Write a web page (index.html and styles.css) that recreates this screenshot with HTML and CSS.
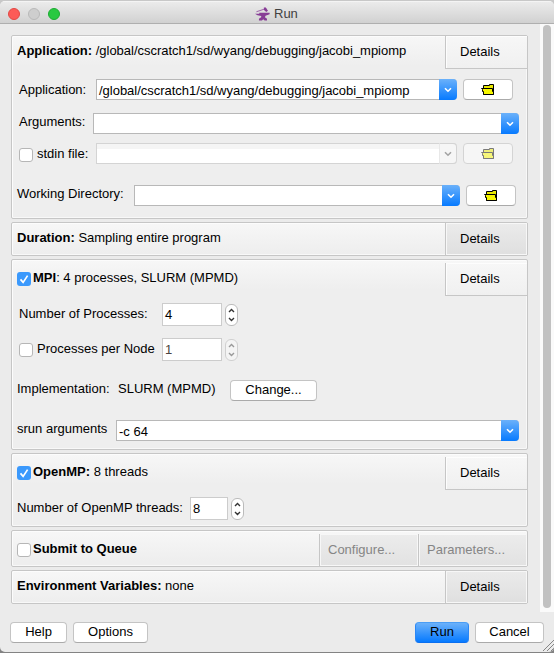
FILE: index.html
```html
<!DOCTYPE html>
<html lang="en">
<head>
<meta charset="utf-8">
<title>Run</title>
<link rel="stylesheet" href="styles.css">
</head>
<body>
<svg class="defs" width="0" height="0" aria-hidden="true">
  <symbol id="folder" viewBox="0 0 14 13"><path d="M2.5 11.5V2.5H8.5V1.5H12.5V11.5z" fill="#e8e800" stroke="#000"/><path d="M.5 5.5H11.5V8.5H12.5V11.5H2.5V8.5H1.5V6.5z" fill="#f6f600" stroke="#000"/></symbol>
  <symbol id="chevron" viewBox="0 0 8 6"><path d="M1 1.2l3 3 3-3" fill="none" stroke="currentColor" stroke-width="1.6"/></symbol>
  <symbol id="check" viewBox="0 0 14 14"><path d="M3.5 7.4l2.6 3L10.6 3.6" fill="none" stroke="#fff" stroke-width="1.7"/></symbol>
  <symbol id="steps" viewBox="0 0 13 22"><path d="M4 8l2.5-2.5L9 8M4 14l2.5 2.5L9 14" fill="none" stroke="currentColor" stroke-width="1.4"/></symbol>
</svg>
<div class="window">
  <header class="titlebar">
    <div class="lights"><i class="light close"></i><i class="light minimize"></i><i class="light maximize"></i></div>
    <svg class="anvil" viewBox="0 0 16 14"><path d="M0 6.6h4.6V5.6H15.6v1.6l-4.4 1.6-.6 1.6 2.2 1.6V14H10.2l-1.4-1.4L7.4 14H4.2v-2l2.4-1.6V9Q2 8.8 0 6.6z" fill="#873d96"/><path d="M1.5 4.6L10.5 1.6" stroke="#9a5ba6" stroke-width="1"/><path d="M9.4 0l2.2 0 2.2 3.4-1.8 1.4L9.6 2.6z" fill="#873d96"/></svg>
    <span class="title">Run</span>
  </header>
  <div class="viewport">
    <main class="panels">
      <section class="panel application">
        <div class="head"><span class="summary"><b>Application:</b> <span class="path">/global/cscratch1/sd/wyang/debugging/jacobi_mpiomp</span></span><button class="tab open">Details</button></div>
        <div class="row r-app"><label>Application:</label><div class="combo"><span class="value path">/global/cscratch1/sd/wyang/debugging/jacobi_mpiomp</span><span class="arrow"><svg><use href="#chevron"/></svg></span></div><button class="btn browse"><svg><use href="#folder"/></svg></button></div>
        <div class="row r-args"><label>Arguments:</label><div class="combo"><span class="value"></span><span class="arrow"><svg><use href="#chevron"/></svg></span></div></div>
        <div class="row r-stdin"><i class="box"></i><label>stdin file:</label><div class="combo disabled"><span class="value"></span><span class="arrow"><svg><use href="#chevron"/></svg></span></div><button class="btn browse disabled"><svg><use href="#folder"/></svg></button></div>
        <div class="row r-dir"><label>Working Directory:</label><div class="combo"><span class="value"></span><span class="arrow"><svg><use href="#chevron"/></svg></span></div><button class="btn browse"><svg><use href="#folder"/></svg></button></div>
      </section>
      <section class="panel duration">
        <div class="head"><span class="summary"><b>Duration:</b> Sampling entire program</span><button class="tab">Details</button></div>
      </section>
      <section class="panel mpi">
        <div class="head inset"><i class="box checked"><svg><use href="#check"/></svg></i><span class="summary"><b>MPI</b>: 4 processes, SLURM (MPMD)</span><button class="tab open">Details</button></div>
        <div class="row r-procs"><label>Number of Processes:</label><span class="number">4</span><span class="spin"><svg><use href="#steps"/></svg></span></div>
        <div class="row r-node"><i class="box"></i><label>Processes per Node</label><span class="number off">1</span><span class="spin disabled"><svg><use href="#steps"/></svg></span></div>
        <div class="row r-impl"><label>Implementation:</label><span class="impl">SLURM (MPMD)</span><button class="btn change">Change...</button></div>
        <div class="row r-srun"><label>srun arguments</label><div class="combo"><span class="value">-c 64</span><span class="arrow"><svg><use href="#chevron"/></svg></span></div></div>
      </section>
      <section class="panel openmp">
        <div class="head inset"><i class="box checked"><svg><use href="#check"/></svg></i><span class="summary"><b>OpenMP:</b> 8 threads</span><button class="tab open">Details</button></div>
        <div class="row r-threads"><label>Number of OpenMP threads:</label><span class="number">8</span><span class="spin"><svg><use href="#steps"/></svg></span></div>
      </section>
      <section class="panel queue">
        <div class="head inset"><i class="box"></i><span class="summary"><b>Submit to Queue</b></span><button class="tab dim configure">Configure...</button><button class="tab dim parameters">Parameters...</button></div>
      </section>
      <section class="panel env">
        <div class="head"><span class="summary"><b>Environment Variables:</b> none</span><button class="tab">Details</button></div>
      </section>
    </main>
    <div class="track"><div class="thumb"></div></div>
  </div>
  <footer class="actions">
    <button class="btn help">Help</button><button class="btn options">Options</button>
    <button class="btn run">Run</button><button class="btn cancel">Cancel</button>
    <svg class="grip" viewBox="0 0 11 11"><path d="M0 11L11 0M4 11l7-7M8 11l3-3" stroke="#858585" fill="none"/></svg>
  </footer>
</div>
</body>
</html>
```
FILE: styles.css
```css
* { box-sizing: border-box; }
body { margin: 0; width: 554px; height: 653px; overflow: hidden; background: linear-gradient(#c8c8c8 0 50%, #838383 50%); font: 13px/16px "Liberation Sans", Arial, sans-serif; color: #000; }
.defs { display: block; height: 0; }
button { font: inherit; color: inherit; margin: 0; padding: 0; }
svg { display: block; flex: none; }
.window { margin-top: 1px; height: 651px; background: #ebebeb; border-radius: 5px; overflow: hidden; display: flex; flex-direction: column; }

.titlebar { height: 23px; flex: none; display: flex; align-items: center; background: linear-gradient(#ebebeb, #d1d1d1); border-top: 1px solid #f4f4f4; border-bottom: 1px solid #afafaf; }
.lights { display: flex; gap: 8px; margin-left: 8px; width: 247px; padding-top: 2px; }
.light { width: 12px; height: 12px; border-radius: 50%; }
.close { background: #fc5b57; border: 1px solid #e34844; }
.minimize { background: #cecece; border: 1px solid #b9b9b9; }
.maximize { background: #29c941; border: 1px solid #1cac31; }
.anvil { width: 15px; height: 14px; margin-top: 2px; }
.title { margin: 2px 0 0 4px; color: #414141; }

.viewport { display: flex; height: 588px; flex: none; }
.panels { width: 540px; padding: 11px 12px 0 11px; display: flex; flex-direction: column; gap: 3px; }
.track { width: 14px; background: #fafafa; padding: 1px 2px 4px 3px; }
.thumb { width: 8px; height: 100%; border-radius: 4px; background: #c1c1c1; }

.panel { border: 1px solid #c6c6c6; border-radius: 2px; background: linear-gradient(#f7f7f7, #eee 30px); box-shadow: inset 1px 1px #fcfcfc, inset -1px -1px #f8f8f8; flex: none; }
.application { height: 184px; }
.duration { height: 34px; }
.mpi { height: 191px; }
.openmp { height: 74px; }
.queue { height: 37px; }
.env { height: 34px; }

.head { display: flex; height: 32px; align-items: center; padding-left: 5px; }
.head.inset { height: 36px; padding-top: 3px; }
.summary { flex: 1; white-space: nowrap; margin-top: -2px; }
.box + .summary { margin-left: 2px; }
.inset .summary { margin-top: -3px; }
.path { letter-spacing: -0.02px; }
.tab { align-self: stretch; width: 83px; margin-right: -1px; border: solid #c6c6c6; border-width: 0 1px 0 1px; padding: 0 14px; text-align: left; background: linear-gradient(#ebebeb, #dfdfdf); box-shadow: inset 1px 1px #f7f7f7, inset -1px -1px #f7f7f7; }
.tab.open { height: 33px; align-self: flex-start; border-width: 0 1px 1px 1px; background: linear-gradient(#f7f7f7, #f0f0f0); box-shadow: inset 1px 1px #fdfdfd; }
.tab.dim { color: #858585; align-self: flex-start; height: 32px; background: linear-gradient(#ececec, #e2e2e2); }
.configure { width: 100px; padding: 0 8px; }
.parameters { width: 110px; padding: 0 8px; }
.queue .head { height: 35px; }

.row { display: flex; align-items: center; }
label { white-space: nowrap; flex: none; }
.combo { flex: none; display: flex; height: 21px; background: #fff; border: 1px solid #b8b8b8; border-right: 0; border-radius: 0 4px 4px 0; }
.value { flex: 1; padding: 3px 0 0 2px; white-space: nowrap; }
.arrow { width: 18px; margin: -1px 0; border-radius: 0 4px 4px 0; background: linear-gradient(#6bb1fa, #067aff); color: #fff; display: flex; align-items: center; justify-content: center; }
.arrow svg { width: 8px; height: 6px; margin-top: 1px; }
.combo.disabled { border-color: #d4d4d4; background: linear-gradient(#f5f5f5 5px, #fff 5px); }
.disabled .arrow { background: #f6f6f6; color: #a4a4a4; border: 1px solid #d4d4d4; border-left-color: #e8e8e8; }
.btn { flex: none; height: 21px; border: 1px solid #c4c4c4; border-bottom-color: #aaa; border-radius: 4px; background: #fff; text-align: center; line-height: 15px; padding-bottom: 3px; }
.browse { width: 50px; margin-left: 6px; padding: 0; display: flex; align-items: center; justify-content: center; }
.browse svg { width: 14px; height: 13px; margin-top: -1px; }
.btn.disabled { background: #f6f6f6; border-color: #d4d4d4; }
.btn.disabled svg { opacity: .5; }
.box { flex: none; width: 14px; height: 14px; border: 1px solid #b6b6b6; border-radius: 3px; background: #fff; }
.box.checked { border: 0; background: #3b99fc; margin-top: -2px; }
.box svg { width: 14px; height: 14px; }
.number { flex: none; height: 23px; border: 1px solid #ccc; background: #fff; padding: 3px 0 0 2px; }
.number.off { color: #4a4240; }
.spin { flex: none; width: 13px; height: 22px; margin: 1px 0 0 3px; border: 1px solid #bbb; border-radius: 6px; background: #fff; color: #333; }
.spin svg { width: 13px; height: 22px; margin: -1px; }
.spin.disabled { background: #f4f4f4; color: #999; border-color: #d0d0d0; }

.r-app { height: 21px; margin-top: 11px; padding-left: 7px; }
.r-app label { width: 77px; }
.r-app .combo { width: 361px; }
.r-args { height: 21px; margin-top: 13px; padding-left: 7px; }
.r-args label { width: 74px; padding-bottom: 3px; }
.r-args .combo { width: 426px; }
.r-stdin { height: 21px; margin-top: 9px; padding-left: 7px; }
.r-stdin .box { margin-top: 2px; }
.r-stdin label { width: 59px; margin-left: 4px; }
.r-stdin .combo { width: 361px; }
.r-dir { height: 21px; margin-top: 21px; padding-left: 5px; }
.r-dir label { width: 117px; padding-bottom: 3px; }
.r-dir .combo { width: 326px; }

.r-procs { height: 23px; margin-top: 7px; padding-left: 7px; }
.r-procs label { width: 143px; padding-bottom: 1px; }
.r-procs .number, .r-node .number { width: 60px; }
.r-node { height: 23px; margin-top: 12px; padding-left: 7px; }
.r-node label { width: 125px; margin-left: 4px; padding-bottom: 1px; }
.r-impl { height: 21px; margin-top: 19px; padding-left: 5px; }
.r-impl label { width: 101px; padding-bottom: 3px; }
.impl { width: 112px; padding-bottom: 3px; white-space: nowrap; }
.change { width: 87px; }
.r-srun { height: 21px; margin-top: 19px; padding-left: 5px; }
.r-srun label { width: 99px; padding-bottom: 3px; }
.r-srun .combo { width: 403px; }
.r-threads { height: 23px; margin-top: 7px; padding-left: 5px; }
.r-threads label { width: 173px; padding-bottom: 1px; }
.r-threads .number { width: 38px; }

.actions { display: flex; height: 39px; padding: 10px 0 0 10px; align-items: flex-start; }
.help { width: 57px; }
.options { width: 75px; margin-left: 6px; }
.run { width: 54px; margin-left: auto; border-color: #4a9df5 #2b87f5 #0a6ff0; background: linear-gradient(#6bb1fa, #067aff); }
.cancel { width: 69px; margin-left: 6px; }
.grip { width: 11px; height: 11px; margin-left: -1px; align-self: flex-end; }
```
